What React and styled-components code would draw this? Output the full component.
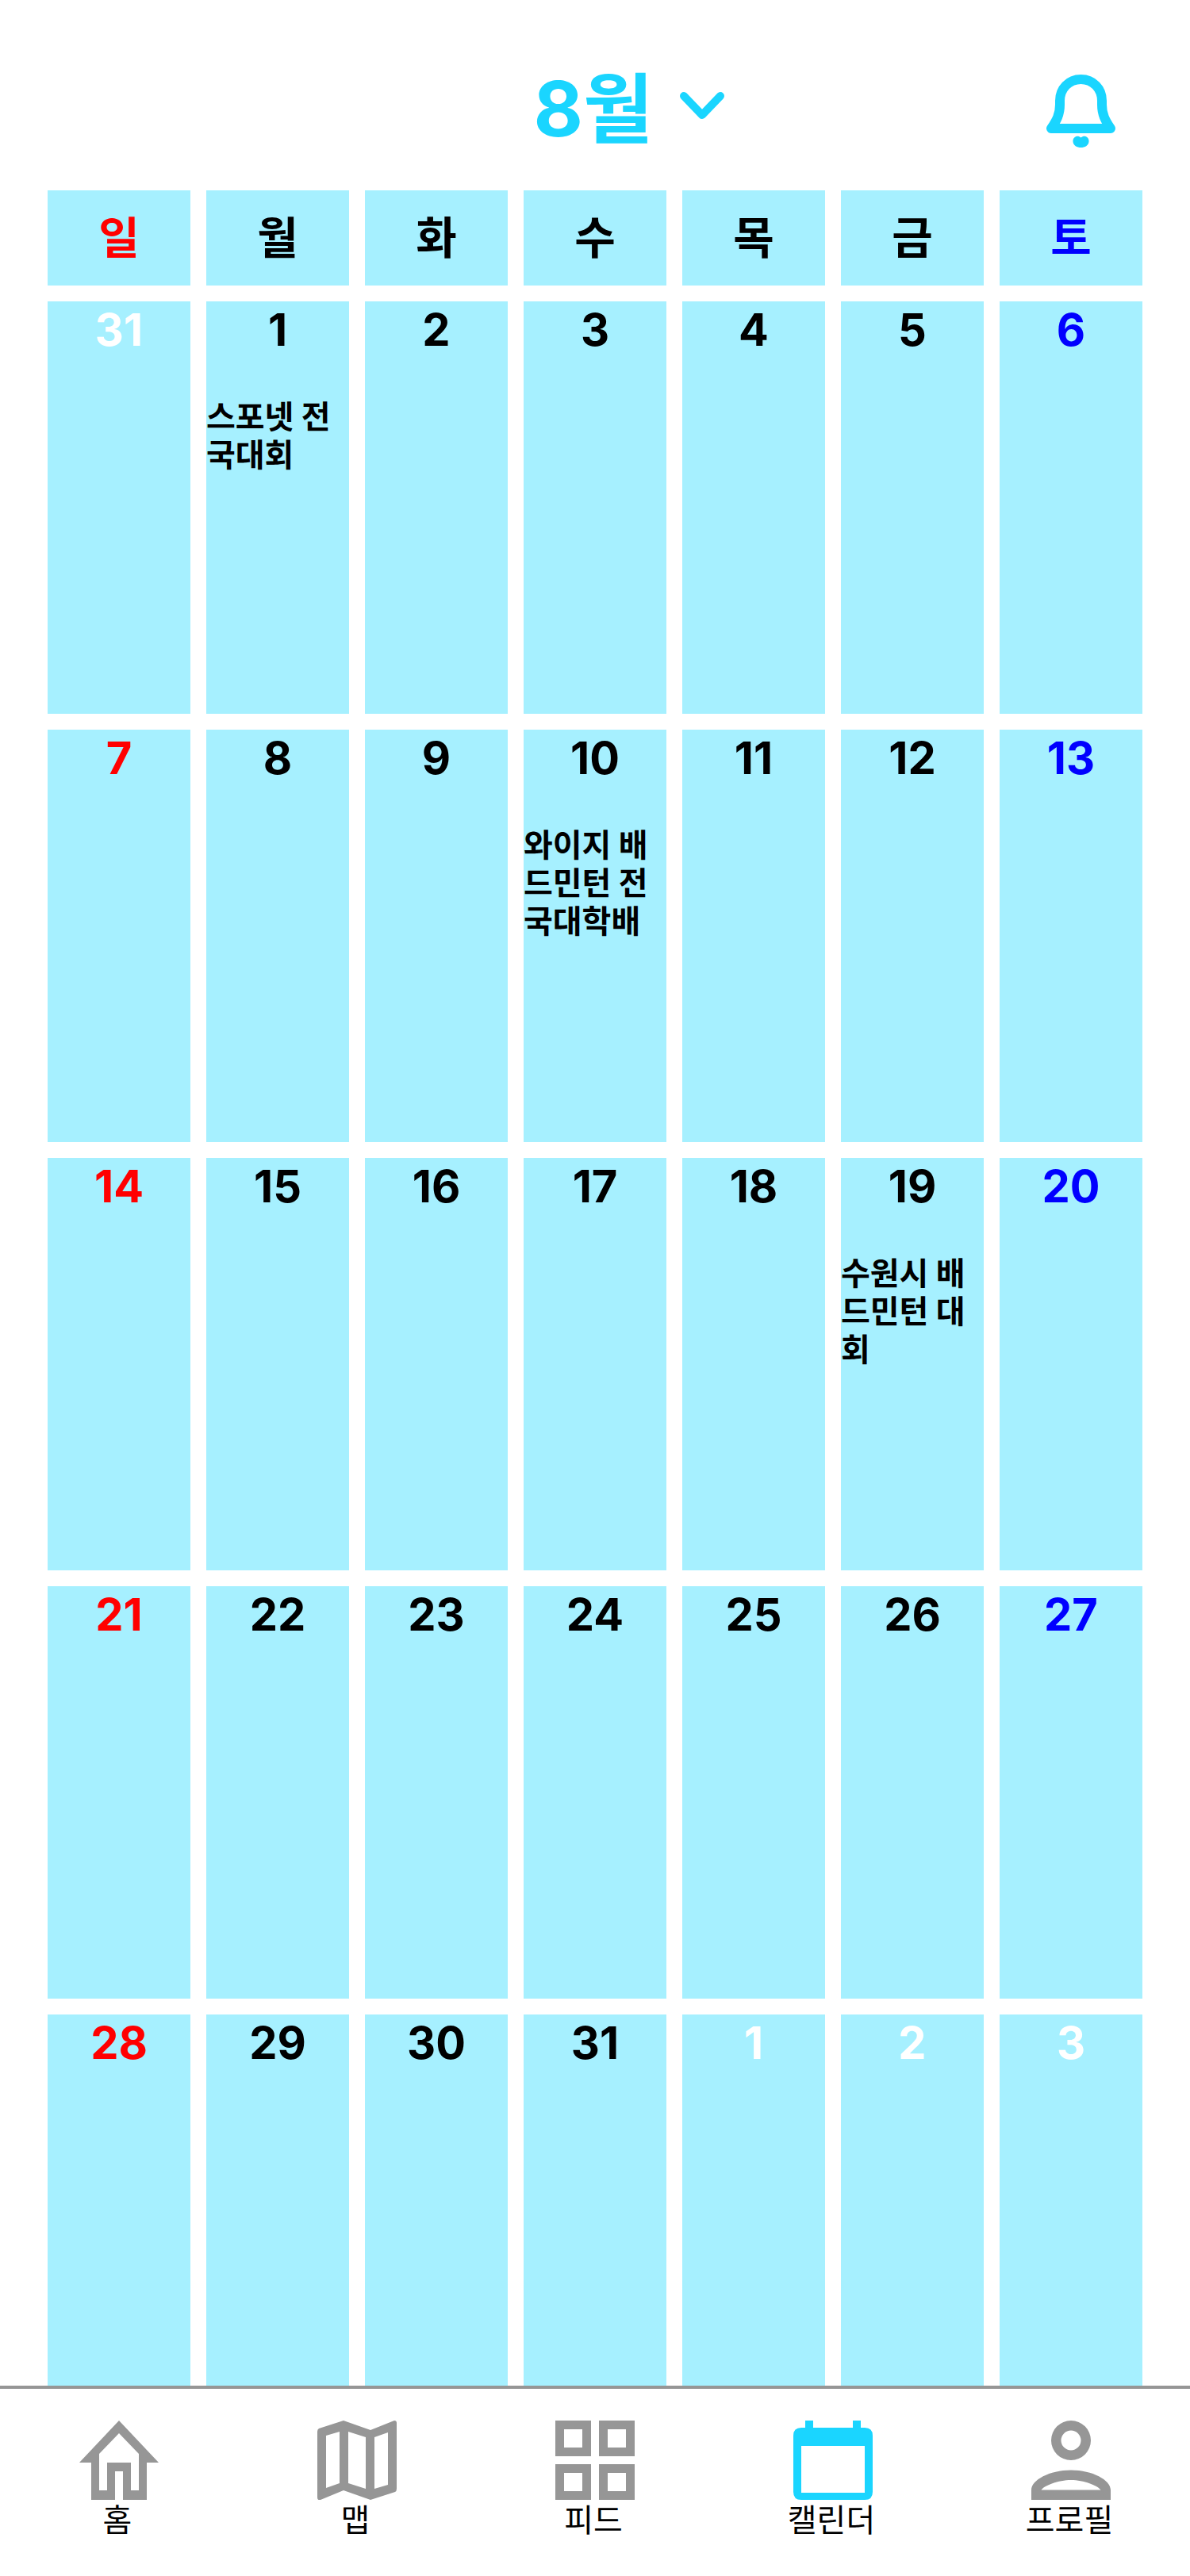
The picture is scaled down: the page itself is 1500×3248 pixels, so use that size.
import React from "react";
import styled, { createGlobalStyle } from "styled-components";

const GlobalStyle = createGlobalStyle`
  * { box-sizing: border-box; }
  body { margin: 0; background: #fff; }
`;

const tones = { sunday: "#ff0000", saturday: "#0000ff", outside: "#ffffff", weekday: "#000000" };

const Screen = styled.div`
  display: flex;
  flex-direction: column;
  height: 100vh;
  overflow: hidden;
  background: #fff;
  color: #000;
  font-family: Inter, "Noto Sans CJK KR", sans-serif;
`;

const Header = styled.header`
  flex: none;
  display: grid;
  grid-template-columns: 1fr auto 1fr;
  align-items: center;
  height: 240px;
  padding: 40px 94px 0 180px;
`;

const MonthButton = styled.button`
  grid-column: 2;
  display: flex;
  align-items: center;
  gap: 34px;
  padding: 0 0 6px;
  border: 0;
  background: none;
  color: #1ad5ff;
  font: inherit;
  font-size: 96px;
  line-height: 116px;
  font-weight: 700;
  cursor: pointer;
`;

const Chevron = styled.svg`
  display: block;
  width: 56px;
  height: 34px;
  margin-bottom: 8px;
`;

const BellButton = styled.button`
  justify-self: end;
  display: flex;
  padding: 0;
  border: 0;
  background: none;
  color: #1ad5ff;
  cursor: pointer;
`;

const Main = styled.main`
  flex: 1;
  min-height: 0;
  overflow: hidden;
  padding: 0 60px;
`;

const Calendar = styled.table`
  display: block;
  width: 100%;
`;

const Weeks = styled.tbody`
  display: grid;
  gap: 20px;
`;

const WeekdayHead = styled.thead`
  display: block;
  margin-bottom: 20px;
`;

const Row = styled.tr`
  display: grid;
  grid-template-columns: repeat(7, 1fr);
  gap: 20px;
`;

const Weekday = styled.th`
  padding: 26px 0;
  background: #a6f0ff;
  color: ${(p) => tones[p.$tone]};
  font-size: 56px;
  line-height: 68px;
  font-weight: 700;
  text-align: center;
`;

const Day = styled.td`
  height: 520px;
  padding: 0;
  background: #a6f0ff;
  font-weight: 700;
`;

const DayNumber = styled.time`
  display: block;
  color: ${(p) => tones[p.$tone]};
  font-size: 56px;
  line-height: 72px;
  text-align: center;
`;

const Event = styled.p`
  margin: 50px 0 0;
  font-size: 40px;
  line-height: 48px;
`;

const TabBar = styled.nav`
  flex: none;
  display: grid;
  grid-template-columns: repeat(5, 1fr);
  height: 240px;
  border-top: 4px solid #969696;
  background: #fff;
`;

const Tab = styled.a`
  display: flex;
  flex-direction: column;
  align-items: center;
  padding-top: 40px;
  color: #000;
  font-size: 40px;
  line-height: 52px;
  text-decoration: none;
`;

const TabIcon = styled.svg`
  display: block;
  width: 100px;
  height: 100px;
  color: ${(p) => (p.$active ? "#1ad5ff" : "#969696")};
`;

const TabLabel = styled.span`
  padding-right: 4px;
`;

const HomeIcon = () => (
  <path fillRule="evenodd" fill="currentColor" d="M50 0 100 53H85V100H55V64H45V100H15V53H0ZM50 16 25 42V88H35V53H65V88H75V42Z" />
);
const MapIcon = () => (
  <path fillRule="evenodd" fill="currentColor" d="M97 0Q100 0 100 3V86Q100 89 98 90L67 100 33 88 4 100Q0 101 0 97V14Q0 11 2 10L33 0 67 12ZM11 19V85L28 79V14ZM39 14V79L61 86V21ZM72 21V86L89 81V15Z" />
);
const GridIcon = () => (
  <path fillRule="evenodd" fill="currentColor" d="M0 0H45V45H0ZM11 11V34H34V11ZM55 0H100V45H55ZM66 11V34H89V11ZM0 55H45V100H0ZM11 66V89H34V66ZM55 55H100V100H55ZM66 66V89H89V66Z" />
);
const CalendarIcon = () => (
  <path fillRule="evenodd" fill="currentColor" d="M15 0H25V9H75V0H85V9H90Q100 9 100 19V90Q100 100 90 100H10Q0 100 0 90V19Q0 9 10 9H15ZM10 32V91H90V32Z" />
);
const ProfileIcon = () => (
  <path fillRule="evenodd" fill="currentColor" d="M50 0A25 25 0 1 1 50 50A25 25 0 1 1 50 0ZM50 12.500A12.500 12.500 0 1 0 50 37.500A12.500 12.500 0 1 0 50 12.500ZM50 62.500C77 62.500 100 75 100 87.500V100H0V87.500C0 75 23 62.500 50 62.500ZM50 75C34 75 16 82 12.500 87.500H87.500C84 82 66 75 50 75Z" />
);

const weekdays = ["일", "월", "화", "수", "목", "금", "토"];
const weeks = [
  [31, 1, 2, 3, 4, 5, 6],
  [7, 8, 9, 10, 11, 12, 13],
  [14, 15, 16, 17, 18, 19, 20],
  [21, 22, 23, 24, 25, 26, 27],
  [28, 29, 30, 31, 1, 2, 3],
];
const events = {
  1: "스포넷 전국대회",
  10: "와이지 배드민턴 전국대학배",
  19: "수원시 배드민턴 대회",
};
const tabs = [
  { label: "홈", Icon: HomeIcon },
  { label: "맵", Icon: MapIcon },
  { label: "피드", Icon: GridIcon },
  { label: "캘린더", Icon: CalendarIcon, active: true },
  { label: "프로필", Icon: ProfileIcon },
];

const columnTone = (column) => (column === 0 ? "sunday" : column === 6 ? "saturday" : "weekday");
const isOutside = (day, week) => (week === 0 && day > 7) || (week === 4 && day < 8);

export default function App() {
  return (
    <Screen lang="ko">
      <GlobalStyle />
      <Header>
        <MonthButton type="button">
          8월
          <Chevron viewBox="0 0 56 34" fill="none" stroke="currentColor" strokeWidth="10" strokeLinecap="round" strokeLinejoin="round" aria-hidden="true">
            <path d="M5 5 28 29 51 5" />
          </Chevron>
        </MonthButton>
        <BellButton type="button" aria-label="알림">
          <svg width="87" height="92" viewBox="0 0 87 92" aria-hidden="true">
            <path fill="none" stroke="currentColor" strokeWidth="12" strokeLinejoin="round" d="M43.5 6C28 6 17 18 17 33V38C17 50 13 58 6 68H81C74 58 70 50 70 38V33C70 18 59 6 43.5 6Z" />
            <path fill="currentColor" d="M43.5 79.500C48 75.500 54 79 53.500 84.500C53 94.500 34 94.500 33.500 84.500C33 79 39 75.500 43.500 79.500Z" />
          </svg>
        </BellButton>
      </Header>
      <Main>
        <Calendar>
          <WeekdayHead>
            <Row>
              {weekdays.map((name, column) => (
                <Weekday key={name} scope="col" $tone={columnTone(column)}>{name}</Weekday>
              ))}
            </Row>
          </WeekdayHead>
          <Weeks>
            {weeks.map((days, week) => (
              <Row key={week}>
                {days.map((day, column) => {
                  const outside = isOutside(day, week);
                  return (
                    <Day key={column}>
                      <DayNumber $tone={outside ? "outside" : columnTone(column)}>{day}</DayNumber>
                      {!outside && events[day] && <Event>{events[day]}</Event>}
                    </Day>
                  );
                })}
              </Row>
            ))}
          </Weeks>
        </Calendar>
      </Main>
      <TabBar>
        {tabs.map(({ label, Icon, active }) => (
          <Tab key={label} href="#" aria-current={active ? "page" : undefined}>
            <TabIcon viewBox="0 0 100 100" $active={active} aria-hidden="true"><Icon /></TabIcon>
            <TabLabel>{label}</TabLabel>
          </Tab>
        ))}
      </TabBar>
    </Screen>
  );
}
